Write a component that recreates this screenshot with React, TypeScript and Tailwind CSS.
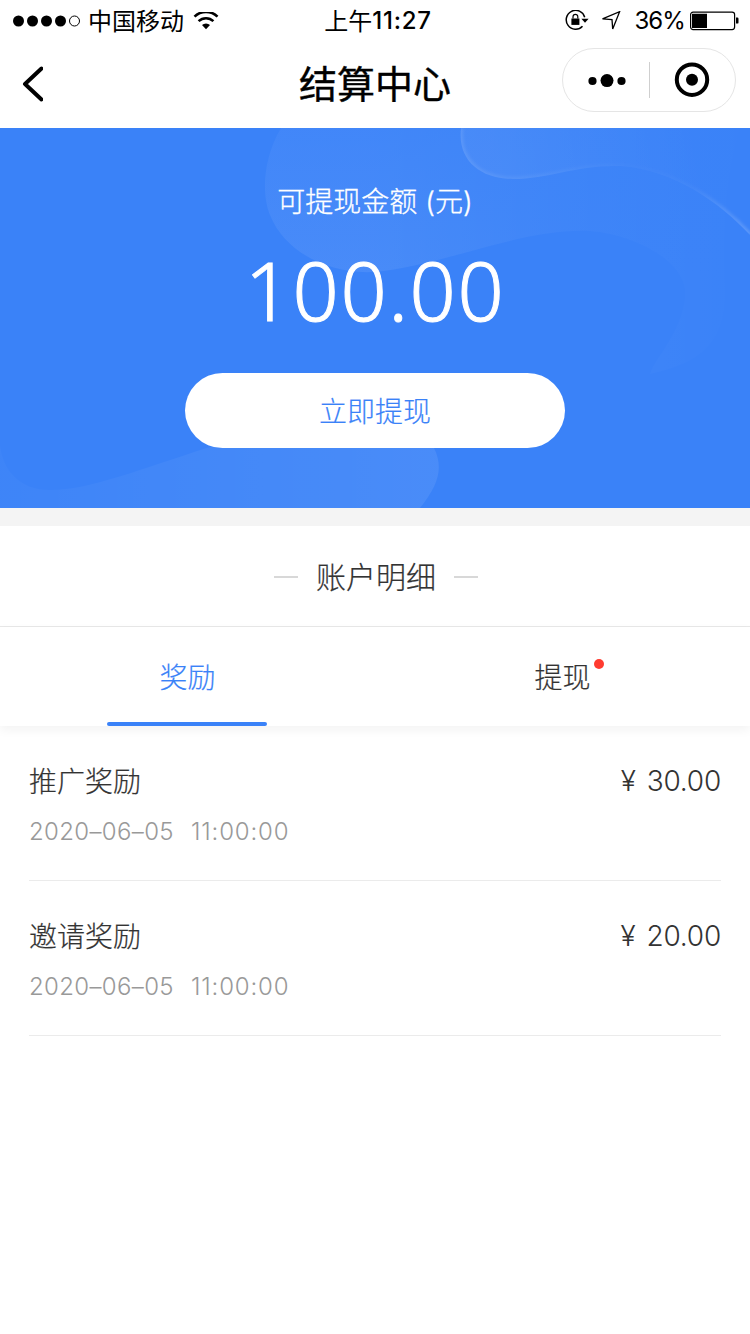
import { useState } from 'react';

type TabKey = 'reward' | 'withdraw';

interface RecordItem {
  title: string;
  date: string;
  time: string;
  amount: string;
}

const records: RecordItem[] = [
  { title: '推广奖励', date: '2020–06–05', time: '11:00:00', amount: '30.00' },
  { title: '邀请奖励', date: '2020–06–05', time: '11:00:00', amount: '20.00' },
];

const tabs: { key: TabKey; label: string; dot?: boolean }[] = [
  { key: 'reward', label: '奖励' },
  { key: 'withdraw', label: '提现', dot: true },
];

function StatusBar() {
  return (
    <div className="grid h-10 grid-cols-[1fr_auto_1fr] items-center px-3 text-2xl leading-10">
      <div className="flex items-center">
        <svg className="h-3 w-[70px]" viewBox="0 0 70 12" aria-hidden>
          <circle cx="6.5" cy="6" r="5.5" />
          <circle cx="20.5" cy="6" r="5.5" />
          <circle cx="34.5" cy="6" r="5.5" />
          <circle cx="48.5" cy="6" r="5.5" />
          <circle cx="62.5" cy="6" r="5" fill="none" stroke="currentColor" />
        </svg>
        <span className="ml-1.5 pt-0.5">中国移动</span>
        <svg className="ml-[9px] h-[19px] w-[26px]" viewBox="0 0 26 19" fill="none" aria-hidden>
          <path d="M1.5 4.6a16.5 16.5 0 0 1 23 0" stroke="currentColor" strokeWidth="2.6" />
          <path d="M5.6 9.2a10.5 10.5 0 0 1 14.8 0" stroke="currentColor" strokeWidth="2.5" />
          <path d="M9 13a5.8 5.8 0 0 1 8 0L13 17.3z" fill="currentColor" />
        </svg>
      </div>
      <div className="flex pl-1.5">
        <span className="pt-0.5">上午</span>
        <span className="pt-px font-medium tracking-[0.8px]">11:27</span>
      </div>
      <div className="flex items-center justify-end">
        <svg className="h-[22px] w-6" viewBox="0 0 24 22" fill="none" aria-hidden>
          <path d="M19.7 7.2A9.4 9.4 0 1 0 17.5 16.2" stroke="currentColor" strokeWidth="1.5" />
          <path d="M16.4 8.8h7.2L20 12.8z" fill="currentColor" />
          <rect x="6.4" y="8.5" width="8" height="6.4" fill="currentColor" />
          <path d="M8 8.5V6.7a2.4 2.4 0 0 1 4.8 0v1.8" stroke="currentColor" strokeWidth="1.2" />
        </svg>
        <svg className="ml-3 h-5 w-5" viewBox="0 0 20 20" fill="none" aria-hidden>
          <path d="M1.5 7.8 18.6.7 11.7 17.9 11 8.7z" stroke="currentColor" strokeWidth="1.3" />
        </svg>
        <span className="ml-[13px] tracking-[-0.9px]">36%</span>
        <svg className="ml-[5px] -mr-[2px] h-5 w-[50px]" viewBox="0 0 50 20" fill="none" aria-hidden>
          <rect x=".6" y="1.1" width="44" height="17.5" rx="2.5" stroke="currentColor" strokeWidth="1.2" />
          <path d="M2 2.7h15v14.4H2zM46 6.6h1.3q1.2 0 1.2 1.2v3.6q0 1.2-1.2 1.2H46z" fill="currentColor" />
        </svg>
      </div>
    </div>
  );
}

function NavBar() {
  return (
    <div className="grid h-22 grid-cols-[1fr_auto_1fr] items-center px-3.5">
      <button type="button" aria-label="返回" className="ml-[5px] w-6">
        <svg className="h-10 w-6" viewBox="0 0 24 40" fill="none" aria-hidden>
          <path
            d="M22.5 4.5 6 20l16.5 15.5"
            stroke="currentColor"
            strokeWidth="4"
            strokeLinecap="round"
            strokeLinejoin="round"
          />
        </svg>
      </button>
      <h1 className="text-[38px] leading-none [-webkit-text-stroke:0.4px]">结算中心</h1>
      <div className="mb-2 flex h-16 w-[174px] items-center justify-self-end rounded-full border border-[#e5e5e5]">
        <button type="button" aria-label="更多" className="flex w-[86px] justify-center pl-0.5">
          <svg className="h-4 w-10" viewBox="0 0 40 16" aria-hidden>
            <circle cx="5.5" cy="9" r="4.1" />
            <circle cx="20" cy="8.6" r="6.5" />
            <circle cx="34.5" cy="9" r="4.1" />
          </svg>
        </button>
        <span className="h-9 w-px bg-[#cfcfcf]" />
        <button type="button" aria-label="关闭" className="flex w-[85px] justify-center pr-px">
          <svg className="h-9 w-9" viewBox="0 0 36 36" fill="none" aria-hidden>
            <circle cx="18" cy="17.7" r="15.2" stroke="currentColor" strokeWidth="4" />
            <circle cx="18" cy="17.7" r="6" fill="currentColor" />
          </svg>
        </button>
      </div>
    </div>
  );
}

function BalanceBackdrop() {
  return (
    <svg className="absolute inset-0 h-full w-full" viewBox="0 0 750 380" fill="none" aria-hidden>
      <defs>
        <linearGradient id="wave" x1="373" y1="0" x2="740" y2="0" gradientUnits="userSpaceOnUse">
          <stop stopColor="#fff" stopOpacity=".075" />
          <stop offset=".55" stopColor="#fff" stopOpacity=".03" />
          <stop offset=".85" stopColor="#fff" stopOpacity=".012" />
          <stop offset="1" stopColor="#fff" stopOpacity=".003" />
        </linearGradient>
        <linearGradient id="waveFade" x1="0" y1="0" x2="0" y2="145" gradientUnits="userSpaceOnUse">
          <stop stopColor="#3a82f8" stopOpacity=".5" />
          <stop offset="1" stopColor="#3a82f8" stopOpacity="0" />
        </linearGradient>
        <linearGradient id="crest" x1="500" y1="40" x2="700" y2="0" gradientUnits="userSpaceOnUse">
          <stop stopColor="#fff" stopOpacity=".045" />
          <stop offset="1" stopColor="#fff" stopOpacity="0" />
        </linearGradient>
        <linearGradient id="edge" x1="460" y1="0" x2="750" y2="0" gradientUnits="userSpaceOnUse">
          <stop stopColor="#fff" stopOpacity=".1" />
          <stop offset=".3" stopColor="#fff" stopOpacity=".05" />
          <stop offset=".6" stopColor="#fff" stopOpacity=".01" />
          <stop offset=".8" stopColor="#fff" stopOpacity=".03" />
          <stop offset="1" stopColor="#fff" stopOpacity=".18" />
        </linearGradient>
        <linearGradient id="swell" x1="0" y1="0" x2="440" y2="0" gradientUnits="userSpaceOnUse">
          <stop stopColor="#fff" stopOpacity=".02" />
          <stop offset="1" stopColor="#fff" stopOpacity=".08" />
        </linearGradient>
        <filter id="soft" x="-10%" y="-10%" width="120%" height="120%">
          <feGaussianBlur stdDeviation="1.8" />
        </filter>
        <clipPath id="crestClip">
          <path d="M461 0C457 32 480 51 513 51C550 51 575 37 620 38C675 42 720 75 750 107V0z" />
        </clipPath>
      </defs>
      <path
        d="M281 0C262 32 262 68 270 87C285 125 330 146 373 144C440 139 520 100 590 103C635 106 690 135 685 170C681 205 655 230 650 246C700 235 725 215 725 165C724 120 722 60 740 0z"
        fill="url(#wave)"
      />
      <path d="M260 0h490v145H260z" fill="url(#waveFade)" />
      <g clipPath="url(#crestClip)">
        <path d="M450 0h300v120H450z" fill="url(#crest)" />
        <path
          d="M461 0C457 32 480 51 513 51C550 51 575 37 620 38C675 42 720 75 750 107"
          stroke="url(#edge)"
          strokeWidth="5"
          filter="url(#soft)"
        />
      </g>
      <path
        d="M0 317C3 343 20 362 50 362C90 362 140 341 210 319L300 290L434 320C444 340 438 358 420 380H0z"
        fill="url(#swell)"
      />
    </svg>
  );
}

function BalancePanel() {
  return (
    <section className="relative h-[380px] overflow-hidden bg-[#3a82f8] text-white">
      <BalanceBackdrop />
      <div className="relative flex flex-col items-center pt-[54px]">
        <p className="text-[28px] leading-10 font-light [-webkit-text-stroke:0.3px]">
          可提现金额<span className="ml-2">(元)</span>
        </p>
        <p className="mt-3 font-['Noto_Sans'] text-[81px] leading-[112px] font-light tracking-[1.6px] [-webkit-text-stroke:1px]">
          100.00
        </p>
        <button
          type="button"
          className="mt-[27px] h-[75px] w-[380px] rounded-full bg-white pt-[3px] text-[28px] font-light text-[#3a82f8] [-webkit-text-stroke:0.2px]"
        >
          立即提现
        </button>
      </div>
    </section>
  );
}

export default function App() {
  const [active, setActive] = useState<TabKey>('reward');

  return (
    <div className="min-h-[1334px] w-[750px] bg-white font-[Inter,'Noto_Sans_CJK_SC',sans-serif] text-black">
      <StatusBar />
      <NavBar />
      <BalancePanel />
      <div className="h-[18px] bg-[#f4f4f4]" />

      <div className="flex h-[101px] items-center justify-center gap-[18px] border-b border-[#e8e8e8] pt-0.5 pl-0.5 text-[30px] font-light text-[#333] [-webkit-text-stroke:0.2px]">
        <span className="h-0.5 w-6 bg-[#d8d8d8]" />
        <h2>账户明细</h2>
        <span className="h-0.5 w-6 bg-[#d8d8d8]" />
      </div>

      <div className="flex h-[99px] shadow-[0_4px_10px_rgba(0,0,0,0.05)]">
        {tabs.map((tab) => (
          <button
            key={tab.key}
            type="button"
            onClick={() => setActive(tab.key)}
            className={`flex flex-1 flex-col items-center justify-between pt-[30px] text-[28px] leading-[42px] font-light [-webkit-text-stroke:0.2px] ${
              active === tab.key ? 'text-[#3a82f8]' : 'text-[#333]'
            }`}
          >
            <span className="relative">
              {tab.label}
              {tab.dot && <i className="absolute top-0.5 -right-[13px] h-2.5 w-2.5 rounded-full bg-[#ff3b30]" />}
            </span>
            {active === tab.key && <span className="mr-px h-1 w-40 rounded-full bg-[#3a82f8]" />}
          </button>
        ))}
      </div>

      <ul className="px-[29px]">
        {records.map((item) => (
          <li key={item.title} className="h-[155px] border-b border-[#ebebeb] pt-[34px] text-[#333]">
            <div className="flex items-center justify-between text-[28px] leading-[42px] font-light">
              <span className="[-webkit-text-stroke:0.2px]">{item.title}</span>
              <span className="flex gap-[11px] pb-0.5 tracking-[-0.2px]">
                <span>¥</span>
                <span>{item.amount}</span>
              </span>
            </div>
            <div className="mt-2.5 flex gap-[17px] text-2xl leading-9 font-light text-[#999]">
              <span className="tracking-[0.35px]">{item.date}</span>
              <span className="tracking-[0.85px]">{item.time}</span>
            </div>
          </li>
        ))}
      </ul>
    </div>
  );
}
